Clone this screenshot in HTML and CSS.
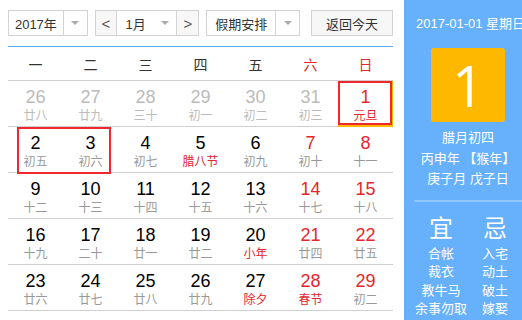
FILE: index.html
```html
<!DOCTYPE html>
<html lang="zh">
<head>
<meta charset="utf-8">
<link rel="stylesheet" href="styles.css">
</head>
<body>
<div class="app">
  <div class="main">
    <div class="toolbar">
      <div class="sel sel-year"><span class="sel-text">2017年</span><span class="sel-arrow"><i class="tri"></i></span></div>
      <div class="sel sel-month"><span class="nav">&lt;</span><span class="sel-text">1月</span><span class="sel-arrow small"><i class="tri"></i></span><span class="nav nav-r">&gt;</span></div>
      <div class="sel sel-hol"><span class="sel-text">假期安排</span><span class="sel-arrow"><i class="tri"></i></span></div>
      <div class="btn-today">返回今天</div>
    </div>
    <div class="cal">
      <div class="week">
        <span>一</span><span>二</span><span>三</span><span>四</span><span>五</span><span class="red">六</span><span class="red">日</span>
      </div>
      <div class="row">
        <div class="cell other"><b>26</b><em>廿八</em></div>
        <div class="cell other"><b>27</b><em>廿九</em></div>
        <div class="cell other"><b>28</b><em>三十</em></div>
        <div class="cell other"><b>29</b><em>初一</em></div>
        <div class="cell other"><b>30</b><em>初二</em></div>
        <div class="cell other"><b>31</b><em>初三</em></div>
        <div class="cell today wk"><b>1</b><em class="fest">元旦</em><span class="mark"></span></div>
      </div>
      <div class="row">
        <div class="cell"><b>2</b><em>初五</em><span class="mark mark-two"></span></div>
        <div class="cell"><b>3</b><em>初六</em></div>
        <div class="cell"><b>4</b><em>初七</em></div>
        <div class="cell"><b>5</b><em class="fest">腊八节</em></div>
        <div class="cell"><b>6</b><em>初九</em></div>
        <div class="cell wk"><b>7</b><em>初十</em></div>
        <div class="cell wk"><b>8</b><em>十一</em></div>
      </div>
      <div class="row">
        <div class="cell"><b>9</b><em>十二</em></div>
        <div class="cell"><b>10</b><em>十三</em></div>
        <div class="cell"><b>11</b><em>十四</em></div>
        <div class="cell"><b>12</b><em>十五</em></div>
        <div class="cell"><b>13</b><em>十六</em></div>
        <div class="cell wk"><b>14</b><em>十七</em></div>
        <div class="cell wk"><b>15</b><em>十八</em></div>
      </div>
      <div class="row">
        <div class="cell"><b>16</b><em>十九</em></div>
        <div class="cell"><b>17</b><em>二十</em></div>
        <div class="cell"><b>18</b><em>廿一</em></div>
        <div class="cell"><b>19</b><em>廿二</em></div>
        <div class="cell"><b>20</b><em class="fest">小年</em></div>
        <div class="cell wk"><b>21</b><em>廿四</em></div>
        <div class="cell wk"><b>22</b><em>廿五</em></div>
      </div>
      <div class="row">
        <div class="cell"><b>23</b><em>廿六</em></div>
        <div class="cell"><b>24</b><em>廿七</em></div>
        <div class="cell"><b>25</b><em>廿八</em></div>
        <div class="cell"><b>26</b><em>廿九</em></div>
        <div class="cell"><b>27</b><em class="fest">除夕</em></div>
        <div class="cell wk"><b>28</b><em class="fest">春节</em></div>
        <div class="cell wk"><b>29</b><em>初二</em></div>
      </div>
      <div class="row">
        <div class="cell"><b>30</b><em>初三</em></div>
        <div class="cell"><b>31</b><em>初四</em></div>
        <div class="cell other"><b>1</b><em>初五</em></div>
        <div class="cell other"><b>2</b><em>初六</em></div>
        <div class="cell other"><b>3</b><em>初七</em></div>
        <div class="cell other"><b>4</b><em>初八</em></div>
        <div class="cell other"><b>5</b><em>初九</em></div>
      </div>
    </div>
  </div>
  <div class="side">
    <div class="side-date">2017-01-01 星期日</div>
    <div class="big-day">1</div>
    <div class="lunar">
      <p>腊月初四</p>
      <p>丙申年 【猴年】</p>
      <p>庚子月 戊子日</p>
    </div>
    <div class="sep"></div>
    <div class="yiji">
      <div class="col">
        <div class="yj-title">宜</div>
        <p>合帐</p><p>裁衣</p><p>教牛马</p><p>余事勿取</p>
      </div>
      <div class="col">
        <div class="yj-title">忌</div>
        <p>入宅</p><p>动土</p><p>破土</p><p>嫁娶</p><p>作灶</p>
      </div>
    </div>
  </div>
</div>
</body>
</html>
```
FILE: styles.css
```css
html, body {
  margin: 0;
  padding: 0;
  background: #fff;
  overflow: hidden;
}
body {
  font-family: "Microsoft YaHei", "Liberation Sans", "Noto Sans CJK SC", sans-serif;
  color: #333;
  width: 522px;
  height: 320px;
}
.app {
  display: flex;
  height: 320px;
  overflow: hidden;
}
.main {
  width: 385px;
  padding-left: 8px;
  padding-right: 11px;
}
.toolbar {
  display: flex;
  align-items: stretch;
  height: 26px;
  margin-top: 10px;
  font-size: 13px;
}
.sel {
  display: flex;
  align-items: stretch;
  border: 1px solid #d3d3d3;
  box-sizing: border-box;
  background: #fff;
}
.sel-text {
  flex: 1;
  display: flex;
  align-items: center;
  justify-content: center;
}
.sel-arrow {
  width: 23px;
  border-left: 1px solid #d3d3d3;
  display: flex;
  align-items: center;
  justify-content: center;
}
.sel-arrow.small {
  border-left: none;
  width: 22px;
}
.tri {
  width: 0;
  height: 0;
  border-left: 4px solid transparent;
  border-right: 4px solid transparent;
  border-top: 4px solid #aaa;
}
.sel-year { width: 80px; }
.sel-month { width: 105px; margin-left: 7px; }
.sel-hol { width: 94px; margin-left: 7px; }
.nav {
  width: 20px;
  background: #f7f7f7;
  border-right: 1px solid #d3d3d3;
  display: flex;
  align-items: center;
  justify-content: center;
  color: #555;
  font-size: 15px;
}
.nav-r {
  border-right: none;
  border-left: 1px solid #d3d3d3;
  width: 21px;
}
.btn-today {
  margin-left: 11px;
  width: 82px;
  border: 1px solid #d3d3d3;
  background: #f7f7f7;
  box-sizing: border-box;
  display: flex;
  align-items: center;
  justify-content: center;
}
.cal {
  margin-top: 10px;
  border-top: 1px solid #5aa9f7;
}
.week {
  display: grid;
  grid-template-columns: repeat(7, 55px);
  height: 33px;
  border-bottom: 1px solid #cfcfcf;
  align-items: center;
  font-size: 14px;
  color: #333;
}
.week span { text-align: center; }
.red { color: #e6262e; }
.row {
  display: grid;
  grid-template-columns: repeat(7, 55px);
  height: 45px;
  border-bottom: 1px solid #cfcfcf;
}
.cell {
  position: relative;
  display: flex;
  flex-direction: column;
  align-items: center;
  box-sizing: border-box;
  padding-top: 6px;
}
.cell b {
  font-family: "Liberation Sans", Arial, sans-serif;
  font-weight: normal;
  font-size: 18px;
  line-height: 20px;
  color: #000;
}
.cell em {
  font-style: normal;
  font-size: 12px;
  line-height: 18px;
  color: #999;
}
.cell.other b, .cell.other em { color: #bbb; }
.cell.wk b { color: #e6262e; }
.cell em.fest { color: #e6262e; }
.cell.today {
  border: 1px solid #ffb800;
  border-top: none;
  border-bottom-width: 2px;
  padding-top: 6px;
}
.mark {
  position: absolute;
  left: 0;
  top: 0;
  width: 55px;
  height: 45px;
  box-sizing: border-box;
  border: 2px solid #f0282d;
}
.cell.today .mark {
  left: -1px;
  top: 0;
  width: 54px;
  height: 44px;
}
.mark-two {
  left: 9px;
  top: 0;
  width: 94px;
  height: 47px;
}
.side {
  width: 118px;
  box-sizing: border-box;
  padding-left: 10px;
  background: #66b0fc;
  color: #fff;
  display: flex;
  flex-direction: column;
  align-items: center;
  overflow: hidden;
}
.side-date {
  align-self: flex-start;
  margin-left: 2px;
  font-size: 13px;
  margin-top: 16px;
  line-height: 16px;
  white-space: nowrap;
}
.big-day {
  margin-top: 16px;
  width: 74px;
  height: 74px;
  flex: none;
  background: #ffb800;
  border-radius: 3px;
  font-family: "Open Sans", "Liberation Sans", sans-serif;
  font-weight: 400;
  font-size: 56px;
  line-height: 74px;
  text-align: center;
  color: #fff;
}
.lunar {
  margin-top: 6px;
  font-size: 13px;
  text-align: center;
  white-space: nowrap;
}
.lunar p { margin: 0; line-height: 20.5px; }
.sep {
  align-self: stretch;
  margin-top: 10px;
  height: 2px;
  flex: none;
  background: #8ec6ff;
}
.yiji {
  display: flex;
  width: 100%;
  margin-top: 11px;
}
.yiji .col {
  flex: 1;
  text-align: center;
  font-size: 13px;
  white-space: nowrap;
}
.yj-title {
  font-size: 24px;
  line-height: 32px;
}
.yiji p { margin: 0; line-height: 18.5px; }
```
